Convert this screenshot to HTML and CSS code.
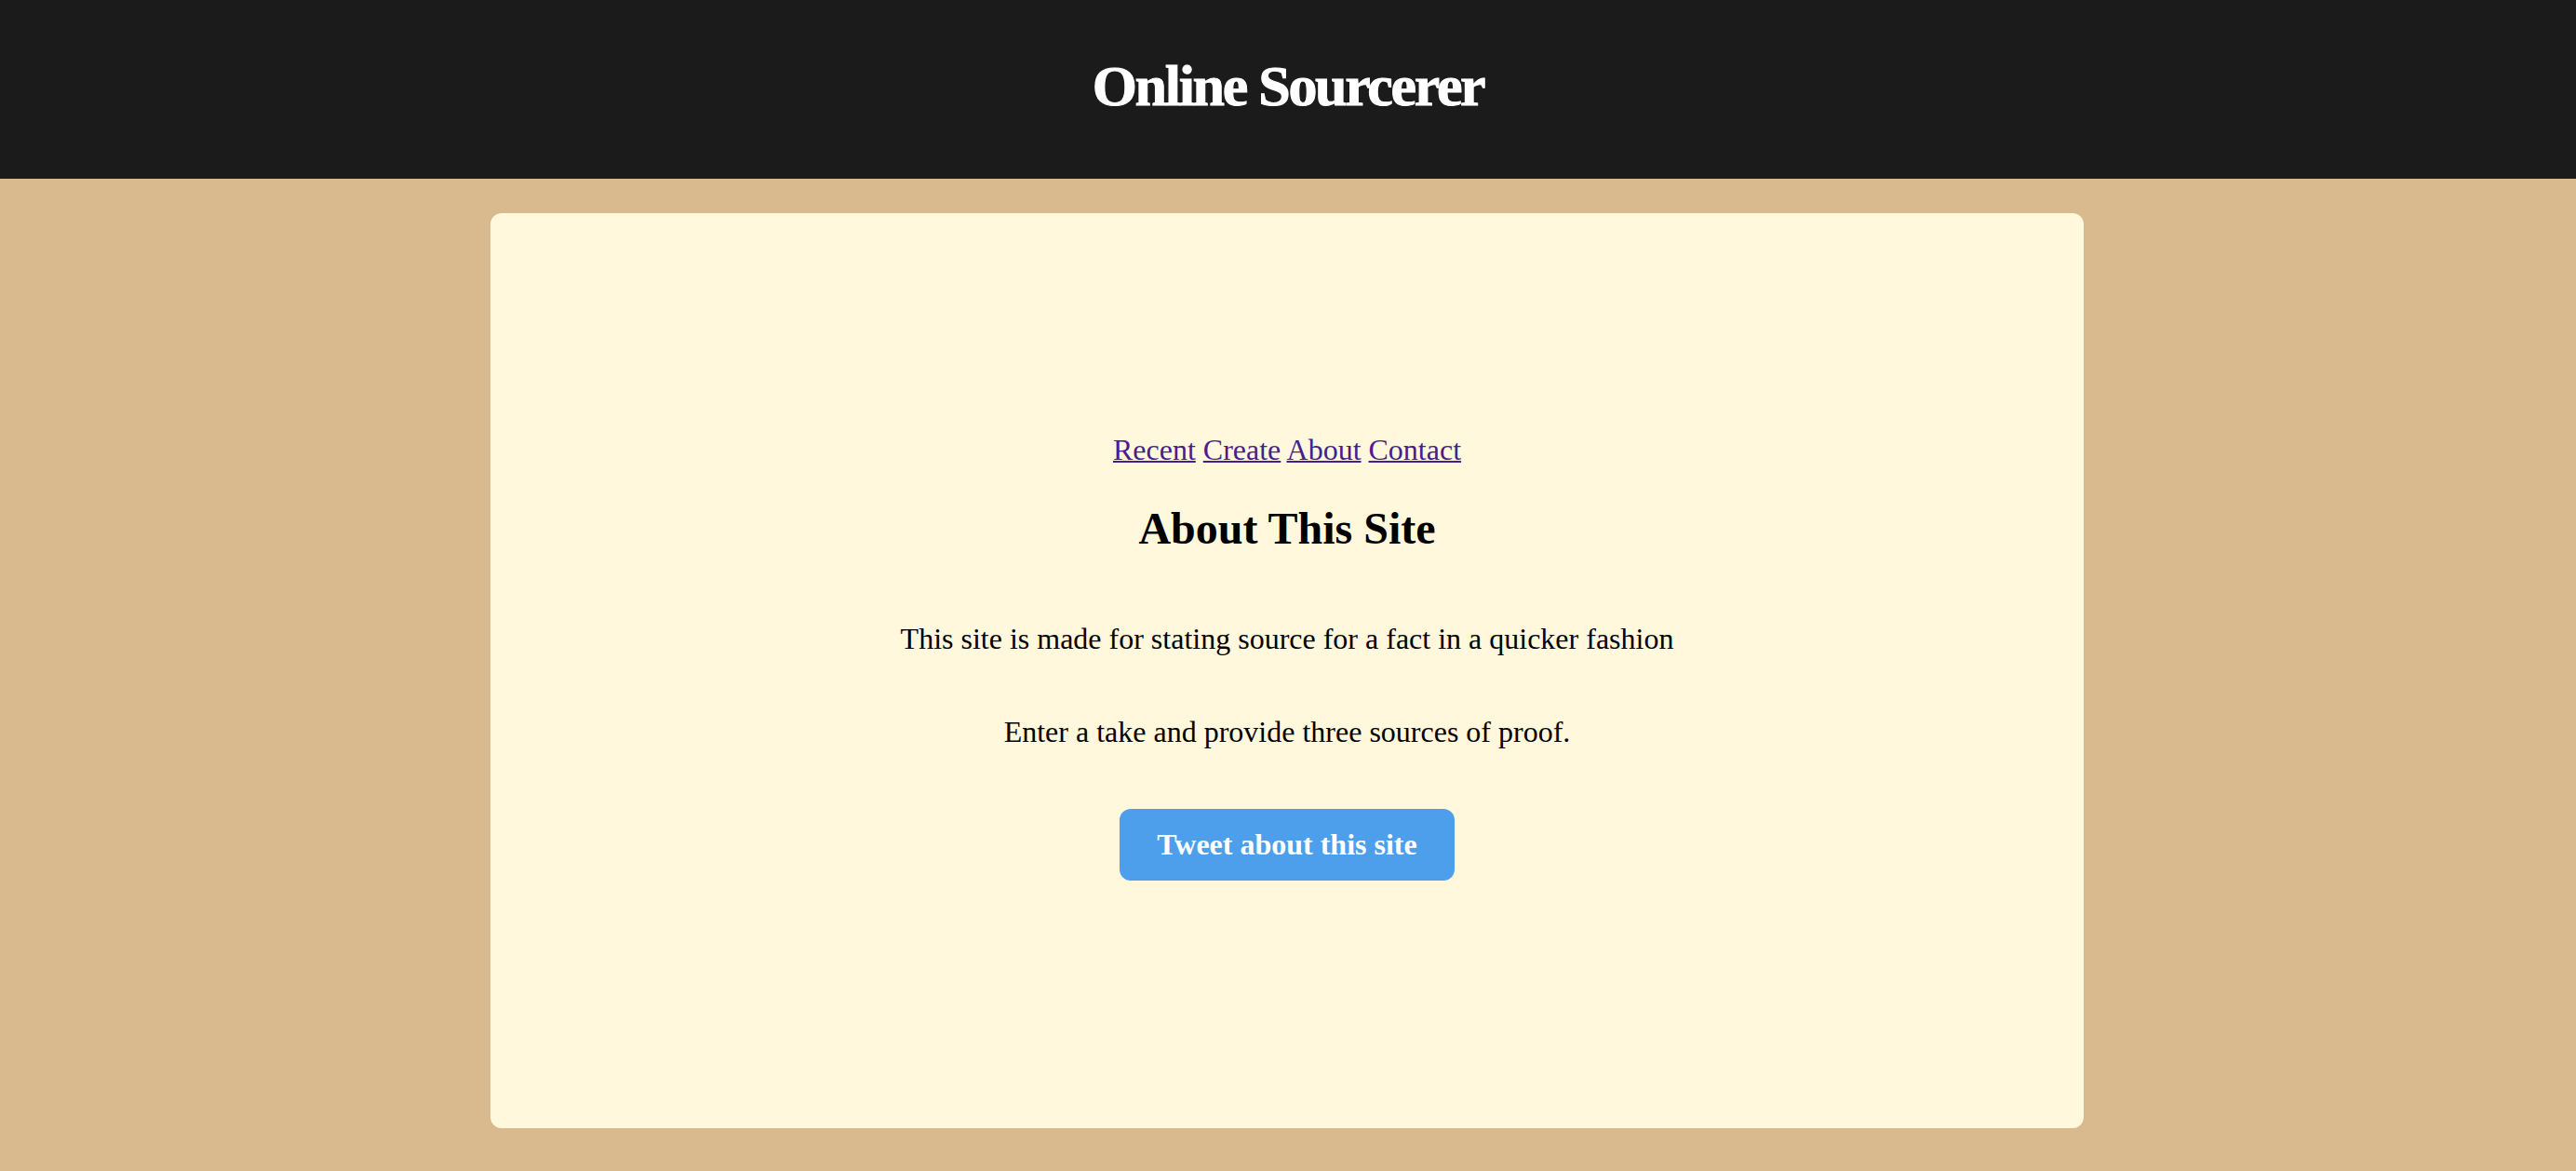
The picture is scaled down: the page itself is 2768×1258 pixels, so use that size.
FILE: index.html
```html
<!DOCTYPE html>
<html lang="en">
<head>
    <meta charset="UTF-8">
    <meta name="viewport" content="width=device-width, initial-scale=1.0">
    <title>About - Online Sourcerer</title>
    <link rel="stylesheet" href="styles.css">
</head>
<body>
    <header class="site-header">
        <h1 class="site-title">Online Sourcerer</h1>
    </header>

    <main class="page">
        <section class="card">
            <nav class="nav">
                <a href="#recent">Recent</a>
                <a href="#create">Create</a>
                <a href="#about">About</a>
                <a href="#contact">Contact</a>
            </nav>
            <h2 class="card-title">About This Site</h2>
            <p class="card-text">This site is made for stating source for a fact in a quicker fashion</p>
            <p class="card-text">Enter a take and provide three sources of proof.</p>
            <a class="tweet-button" href="#tweet">Tweet about this site</a>
        </section>
    </main>
</body>
</html>
```

FILE: styles.css
```css
body {
    margin: 0;
    height: 1258px;
    overflow: hidden;
    background-color: #d8ba8e;
    font-family: "Liberation Serif", "Times New Roman", serif;
    color: #000;
}
.site-header {
    height: 192px;
    display: flex;
    align-items: center;
    justify-content: center;
    background-color: #1b1b1b;
}
.site-title {
    margin: 0 0 7px;
    font-size: 62px;
    font-weight: bold;
    letter-spacing: -2.3px;
    color: #fff;
    -webkit-text-stroke: 1px #fff;
}
.page {
    display: flex;
    justify-content: center;
    padding: 37px 2px 0 0;
}
.card {
    width: 1712px;
    height: 983px;
    box-sizing: border-box;
    padding-bottom: 30px;
    display: flex;
    flex-direction: column;
    align-items: center;
    justify-content: center;
    border-radius: 12px;
    background-color: #fff8dc;
}
.nav {
    font-size: 32px;
}
.nav a {
    color: #481e8c;
    text-decoration-thickness: 2px;
}
.card-title {
    margin: 38px 0 10px;
    font-size: 48px;
}
.card-text {
    margin: 63px 0 0;
    font-size: 32px;
}
.tweet-button {
    margin-top: 64px;
    padding: 20px 40px;
    border-radius: 12px;
    background-color: #4d9fec;
    color: #fff;
    font-size: 32px;
    font-weight: bold;
    text-decoration: none;
}
```
